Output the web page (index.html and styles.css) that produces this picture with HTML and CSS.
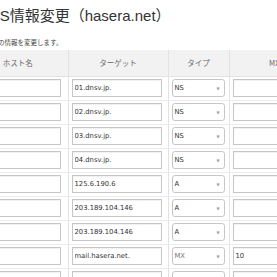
FILE: index.html
```html
<!DOCTYPE html>
<html lang="ja">
<head>
    <meta charset="UTF-8">
    <title>DNS情報変更</title>
    <link rel="stylesheet" href="styles.css">
</head>
<body>
    <div class="page">
        <h1 class="title">DNS情報変更（hasera.net）</h1>
        <p class="lead">DNSの情報を変更します。</p>

        <table class="records">
            <thead>
                <tr>
                    <th class="col-host">ホスト名</th>
                    <th class="col-target">ターゲット</th>
                    <th class="col-type">タイプ</th>
                    <th class="col-mx">MX優先度</th>
                </tr>
            </thead>
            <tbody>
                <tr>
                    <td><input class="field host" type="text" value=""></td>
                    <td><input class="field target" type="text" value="01.dnsv.jp."></td>
                    <td><div class="select"><span>NS</span><i>&#9660;</i></div></td>
                    <td><input class="field mx" type="text" value=""></td>
                </tr>
                <tr>
                    <td><input class="field host" type="text" value=""></td>
                    <td><input class="field target" type="text" value="02.dnsv.jp."></td>
                    <td><div class="select"><span>NS</span><i>&#9660;</i></div></td>
                    <td><input class="field mx" type="text" value=""></td>
                </tr>
                <tr>
                    <td><input class="field host" type="text" value=""></td>
                    <td><input class="field target" type="text" value="03.dnsv.jp."></td>
                    <td><div class="select"><span>NS</span><i>&#9660;</i></div></td>
                    <td><input class="field mx" type="text" value=""></td>
                </tr>
                <tr>
                    <td><input class="field host" type="text" value=""></td>
                    <td><input class="field target" type="text" value="04.dnsv.jp."></td>
                    <td><div class="select"><span>NS</span><i>&#9660;</i></div></td>
                    <td><input class="field mx" type="text" value=""></td>
                </tr>
                <tr>
                    <td><input class="field host" type="text" value=""></td>
                    <td><input class="field target" type="text" value="125.6.190.6"></td>
                    <td><div class="select"><span>A</span><i>&#9660;</i></div></td>
                    <td><input class="field mx" type="text" value=""></td>
                </tr>
                <tr>
                    <td><input class="field host" type="text" value=""></td>
                    <td><input class="field target" type="text" value="203.189.104.146"></td>
                    <td><div class="select"><span>A</span><i>&#9660;</i></div></td>
                    <td><input class="field mx" type="text" value=""></td>
                </tr>
                <tr>
                    <td><input class="field host" type="text" value=""></td>
                    <td><input class="field target" type="text" value="203.189.104.146"></td>
                    <td><div class="select"><span>A</span><i>&#9660;</i></div></td>
                    <td><input class="field mx" type="text" value=""></td>
                </tr>
                <tr>
                    <td><input class="field host" type="text" value=""></td>
                    <td><input class="field target" type="text" value="mail.hasera.net."></td>
                    <td><div class="select"><span class="light">MX</span><i>&#9660;</i></div></td>
                    <td><input class="field mx" type="text" value="10"></td>
                </tr>
                <tr>
                    <td><input class="field host" type="text" value=""></td>
                    <td><input class="field target" type="text" value=""></td>
                    <td><div class="select"><span></span><i>&#9660;</i></div></td>
                    <td><input class="field mx" type="text" value=""></td>
                </tr>
            </tbody>
        </table>
    </div>
</body>
</html>
```

FILE: styles.css
```css
* {
    margin: 0;
    padding: 0;
    box-sizing: border-box;
}

body {
    font-family: "DejaVu Sans", "Noto Sans CJK JP", sans-serif;
    background-color: #fff;
    color: #333;
    overflow: hidden;
}

.page {
    width: 400px;
}

.title {
    font-family: "Liberation Sans", "Noto Sans CJK JP", sans-serif;
    font-size: 15px;
    font-weight: normal;
    color: #333;
    line-height: 1;
    margin: 8px 0 0 -22px;
    white-space: nowrap;
}

.lead {
    font-family: "Noto Sans CJK JP", sans-serif;
    font-size: 6.5px;
    line-height: 10px;
    color: #444;
    margin: 14px 0 0 -15px;
    white-space: nowrap;
}

.records {
    border-collapse: collapse;
    table-layout: fixed;
    margin: 3px 0 0 -32px;
    width: 374px;
}

.records th {
    font-family: "Noto Sans CJK JP", sans-serif;
    font-weight: normal;
    font-size: 7.5px;
    color: #666;
    background-color: #f2f2f2;
    height: 26px;
    text-align: center;
    border-right: 1px solid #e2e2e2;
    border-bottom: 1px solid #e2e2e2;
}

.records td {
    height: 24px;
    padding: 0 0 0 3px;
    border-right: 1px solid #e2e2e2;
    border-bottom: 1px solid #ececec;
}

.col-host { width: 100px; }
.col-target { width: 100px; }
.col-type { width: 61px; }
.col-mx { width: 113px; }

.field {
    display: block;
    height: 18px;
    border: 1px solid #c6c6c6;
    box-shadow: inset 0 1px 1px rgba(0, 0, 0, 0.06);
    background-color: #fff;
    font-family: "DejaVu Sans", sans-serif;
    font-size: 6.8px;
    color: #333;
    padding: 0 2px;
    outline: none;
}

.host { width: 90px; }
.target { width: 90px; }
.mx { width: 90px; }

.select {
    width: 53px;
    height: 18px;
    border: 1px solid #c6c6c6;
    border-radius: 3px;
    display: flex;
    align-items: center;
    justify-content: space-between;
    padding: 0 4px 0 2px;
    font-size: 6.8px;
    color: #333;
}

.select .light {
    color: #777;
}

.select i {
    font-style: normal;
    font-size: 4px;
    color: #999;
}
```
